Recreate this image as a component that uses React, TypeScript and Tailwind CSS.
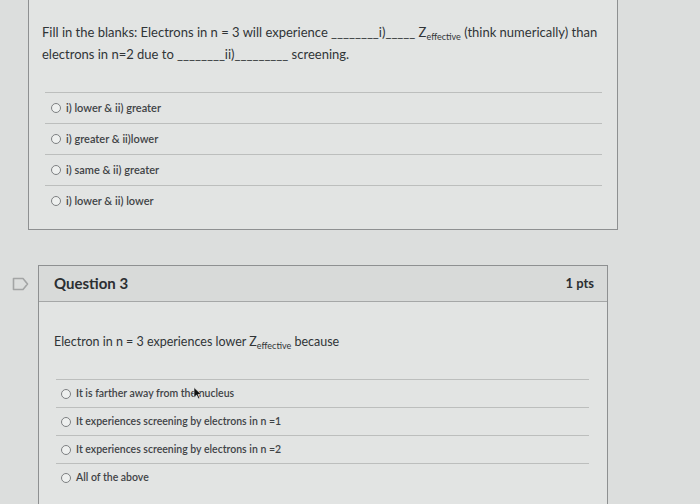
import React from "react";

const font = { fontFamily: "Lato, 'Open Sans', sans-serif" };

function Radio() {
  return <span className="inline-block h-[10px] w-[10px] shrink-0 rounded-full border border-[#7d8082] bg-[#eef0ef]" />;
}

function Zeff() {
  return (
    <span>
      Z<span className="relative top-[3px] text-[9px]">effective</span>
    </span>
  );
}

function Flag() {
  return (
    <svg width="17" height="14" viewBox="0 0 17 14" fill="none">
      <path d="M1.5 1.5h9.5l4.5 5.5-4.5 5.5H1.5z" stroke="#a3a5a5" strokeWidth="1.6" strokeLinejoin="round" />
    </svg>
  );
}

function Cursor() {
  return (
    <svg width="9" height="12" viewBox="0 0 9 12" className="absolute left-[137px] top-[7px]">
      <path d="M1 0.5v10l2.6-2.4 1.8 3.6 1.4-0.7-1.8-3.5h3.4z" fill="#111" stroke="#eee" strokeWidth="0.6" />
    </svg>
  );
}

const top = ["i) lower & ii) greater", "i) greater & ii)lower", "i) same & ii) greater", "i) lower & ii) lower"];
const bottom = [
  "It is farther away from the nucleus",
  "It experiences screening by electrons in n =1",
  "It experiences screening by electrons in n =2",
  "All of the above",
];

export default function App() {
  return (
    <div className="h-[504px] w-[700px] overflow-hidden bg-[#dcdedd] text-[#303437]" style={font}>
      <div className="ml-[28px] h-[230px] w-[590px] border-x border-b border-[#8e9091] bg-[#e2e4e3]">
        <div className="pl-[13px] pt-[22px] text-[13px] leading-[20px]">
          <div>
            Fill in the blanks: Electrons in n = 3 will experience ________i)_____ <Zeff /> (think numerically) than
          </div>
          <div>electrons in n=2 due to ________ii)_________ screening.</div>
        </div>
        <div className="ml-[16px] mr-[15px] mt-[28px]">
          {top.map((t) => (
            <div key={t} className="flex h-[31px] items-center gap-[5px] border-t border-[#bcbebd] pl-[6px] text-[11px] font-semibold text-[#3f4346]">
              <Radio />
              <span>{t}</span>
            </div>
          ))}
        </div>
      </div>

      <div className="mt-[35px] flex">
        <div className="w-[38px] pl-[12px] pt-[12px]">
          <Flag />
        </div>
        <div className="h-[300px] w-[570px] border border-[#8e9091] bg-[#e2e4e3]">
          <div className="flex h-[36px] items-center justify-between border-b border-[#a5a7a7] bg-[#d8dad9] pl-[15px] pr-[13px]">
            <span className="text-[15px] font-bold text-[#2b2f32]">Question 3</span>
            <span className="text-[13px] font-bold text-[#2b2f32]">1 pts</span>
          </div>
          <div className="pl-[15px] pt-[31px] text-[12.5px] leading-[18px]">
            Electron in n = 3 experiences lower <Zeff /> because
          </div>
          <div className="ml-[17px] mr-[18px] mt-[27px]">
            {bottom.map((t, i) => (
              <div key={t} className="relative flex h-[28px] items-center gap-[5px] border-t border-[#bcbebd] pl-[5px] text-[10.5px] font-semibold text-[#3f4346]">
                <Radio />
                <span>{t}</span>
                {i === 0 && <Cursor />}
              </div>
            ))}
          </div>
        </div>
      </div>
    </div>
  );
}
